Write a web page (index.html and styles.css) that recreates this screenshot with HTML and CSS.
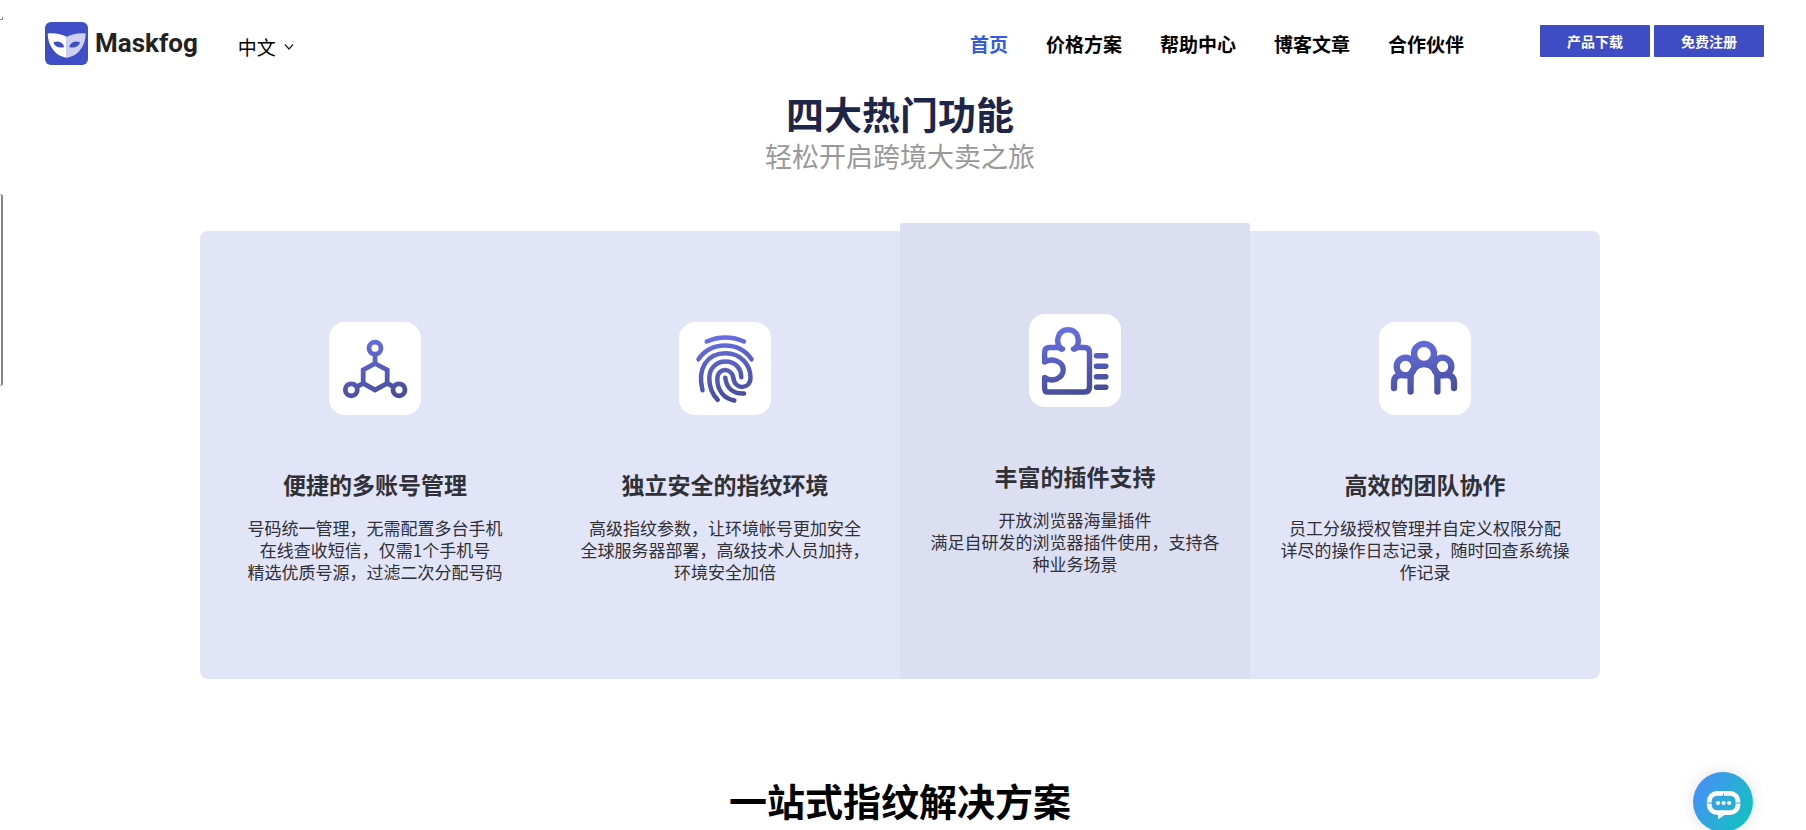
FILE: index.html
```html
<!DOCTYPE html>
<html lang="zh-CN">
<head>
<meta charset="utf-8">
<title>Maskfog</title>
<link rel="stylesheet" href="styles.css">
</head>
<body>
<span class="edge-mark"></span>
<span class="edge-bar"></span>
<header class="header">
  <a class="brand" href="#">
    <svg class="brand-logo" viewBox="0 0 43 43" aria-hidden="true">
      <rect width="43" height="43" rx="6" fill="#3f4dc6"/>
      <path d="M2.7 11.5C10 10.8 16 12 21.7 14.8V35.8C15 34.5 11.5 32 8.3 28 4.5 23.500 2.700 17.500 2.700 11.500Z" fill="#fff"/>
      <path d="M40.700 11.500C33.400 10.800 27.400 12 21.700 14.800V35.800C28.400 34.500 31.900 32 35.100 28 38.900 23.500 40.700 17.500 40.700 11.500Z" fill="#cdd0f1"/>
      <path d="M8.300 20.500C12 18.300 17.500 19.500 19.300 25 14.500 26.500 10 25 8.300 20.500ZM35.100 20.500C31.400 18.300 25.900 19.500 24.100 25 28.900 26.500 33.400 25 35.100 20.500Z" fill="#3f4dc6"/>
    </svg>
    <span class="brand-name">Maskfog</span>
  </a>
  <button class="language" type="button">中文
    <svg class="chevron" viewBox="0 0 10 8" aria-hidden="true"><path d="M1 1.500 5 6 9 1.500" fill="none" stroke="#222" stroke-width="1.200"/></svg>
  </button>
  <nav class="nav">
    <a class="nav-link active" href="#">首页</a>
    <a class="nav-link" href="#">价格方案</a>
    <a class="nav-link" href="#">帮助中心</a>
    <a class="nav-link" href="#">博客文章</a>
    <a class="nav-link" href="#">合作伙伴</a>
  </nav>
  <div class="actions">
    <button class="action" type="button">产品下载</button>
    <button class="action" type="button">免费注册</button>
  </div>
</header>
<main class="main">
  <h2 class="title">四大热门功能</h2>
  <p class="subtitle">轻松开启跨境大卖之旅</p>
  <section class="cards">
    <article class="card">
      <svg class="card-icon" viewBox="0 0 92 92" aria-hidden="true">
        <defs><linearGradient id="ink" gradientUnits="userSpaceOnUse" x1="35" y1="15" x2="50" y2="80"><stop offset="0" stop-color="#656fe0"/><stop offset="1" stop-color="#474c98"/></linearGradient></defs>
        <g fill="none" stroke="url(#ink)" stroke-width="4.800">
          <circle cx="46" cy="25.700" r="6"/><circle cx="22.300" cy="67.300" r="6"/><circle cx="70" cy="67.300" r="6"/>
          <path d="M46 41 58.200 47.500V60.800L46 67.400 34.200 60.800V47.500ZM46.050 31V41M34.200 60.800 27.500 64.400M58.200 60.800 64.800 64.400"/>
        </g>
      </svg>
      <h3 class="card-title">便捷的多账号管理</h3>
      <p class="card-text">号码统一管理，无需配置多台手机<br>在线查收短信，仅需1个手机号<br>精选优质号源，过滤二次分配号码</p>
    </article>
    <article class="card">
      <svg class="card-icon" viewBox="0 0 92 92" aria-hidden="true">
        <g fill="none" stroke="url(#ink)" stroke-width="4.500" stroke-linecap="round">
          <path d="M27.700 19C39.500 13.500 53.500 13.500 65 19"/>
          <path d="M19.500 36.800C32 18.500 60 18.500 72.500 36.800"/>
          <path d="M23.500 67.700C18 46 28 30.700 46.700 30.700 61 30.700 71.500 41.500 71.500 55 71.500 67 56.500 67.500 54.500 56.500 53.500 44.500 38.300 44.500 38.300 56.500 38.300 68 45 76 55.300 78"/>
          <path d="M62.300 54.700C62 45 55.500 39 46.700 39 37 39 30.300 46 30.300 55.700 30.300 65 33.500 72 38.700 77.300"/>
          <path d="M46.300 55.300C47.500 66 54.500 71.500 65 71"/>
        </g>
      </svg>
      <h3 class="card-title">独立安全的指纹环境</h3>
      <p class="card-text">高级指纹参数，让环境帐号更加安全<br>全球服务器部署，高级技术人员加持，环境安全加倍</p>
    </article>
    <article class="card raised">
      <svg class="card-icon" viewBox="0 0 92 92" aria-hidden="true">
        <g fill="none" stroke="url(#ink)" stroke-width="5.400" stroke-linecap="round" stroke-linejoin="round">
          <path d="M15.600 47.500V38Q15.600 33 20.600 33H30.500L32.200 34.500C25.500 27 29 15.300 39 15.300S52.500 27 45.800 34.500L47.500 33H55.500Q60.500 33 60.500 38V72.500Q60.500 77.500 55.500 77.500H17.600Q15.600 77.500 15.600 72.500V63C19 65.500 24 66 27.500 64.500 36.500 60 36.500 50 27.500 46.500 23.500 45 19 45.500 15.600 47.500"/>
          <path d="M28.500 32.500 33.500 34.500M49.500 32.500 44.500 34.500M67.500 41.300H76.800M67.500 51.700H76.800M67.500 62.300H76.800M67.500 72.700H76.800"/>
        </g>
      </svg>
      <h3 class="card-title">丰富的插件支持</h3>
      <p class="card-text">开放浏览器海量插件<br>满足自研发的浏览器插件使用，支持各种业务场景</p>
    </article>
    <article class="card">
      <svg class="card-icon" viewBox="0 0 92 92" aria-hidden="true">
        <g fill="none" stroke="url(#ink)" stroke-width="6.300" stroke-linecap="round">
          <circle cx="45" cy="31.300" r="10"/><circle cx="26.500" cy="44" r="8.800"/><circle cx="63.500" cy="44" r="8.800"/>
          <path d="M15 65.500V60Q15 52.600 22 52.600H31.600M75 65.500V60Q75 52.600 68 52.600H58.400M31.600 69V55A13.400 13.400 0 0 1 58.400 55V69"/>
        </g>
      </svg>
      <h3 class="card-title">高效的团队协作</h3>
      <p class="card-text">员工分级授权管理并自定义权限分配<br>详尽的操作日志记录，随时回查系统操作记录</p>
    </article>
  </section>
  <h2 class="title solution">一站式指纹解决方案</h2>
</main>
<button class="chat" type="button" aria-label="在线客服">
  <svg viewBox="0 0 60 60" aria-hidden="true">
    <rect x="16.200" y="21.300" width="28.800" height="19.400" rx="8" fill="none" stroke="#fff" stroke-width="4.800"/>
    <path d="M22.500 42H33L26.500 46.500Q25 47.300 25 45.500V42Z" fill="#fff"/>
    <path d="M13.500 31H19M42.500 31H48M30.500 21.500V24" stroke="#2ba9dc" stroke-width="1"/>
    <g fill="#fff"><circle cx="25" cy="31" r="2.100"/><circle cx="30.600" cy="31" r="2.100"/><circle cx="36.200" cy="31" r="2.100"/></g>
  </svg>
</button>
</body>
</html>
```
FILE: styles.css
```css
* { box-sizing: border-box; }

body {
  margin: 0;
  padding-right: 6px;
  background: #fff;
  color: #000;
  font-family: "Noto Sans CJK SC", "Open Sans", sans-serif;
}

h2, h3, p { margin: 0; }

button {
  border: 0;
  padding: 0;
  font-family: inherit;
  cursor: pointer;
}

a { color: inherit; text-decoration: none; }

.edge-mark, .edge-bar {
  position: absolute;
  left: 0;
  width: 3px;
}

.edge-mark {
  top: 17px;
  height: 3px;
  border-right: 1px solid #888;
  border-bottom: 1px solid #888;
}

.edge-bar {
  top: 194px;
  height: 192px;
  border-right: 2px solid #858585;
  border-radius: 0 3px 3px 0;
}

.header {
  display: flex;
  align-items: center;
  height: 87px;
  padding: 0 36px 0 45px;
}

.brand {
  display: flex;
  align-items: center;
  gap: 7px;
}

.brand-logo { width: 43px; height: 43px; }

.brand-name {
  color: #222;
  font: bold 26px/43px Roboto, sans-serif;
}

.language {
  display: flex;
  align-items: center;
  gap: 8px;
  margin: 6px 0 0 40px;
  background: none;
  color: #000;
  font-size: 19px;
  line-height: 24px;
}

.chevron { width: 10px; height: 8px; }

.nav {
  display: flex;
  gap: 38px;
  margin-left: auto;
  font-size: 19px;
  font-weight: bold;
  line-height: 24px;
}

.nav-link.active { color: #345bdd; }

.actions {
  display: flex;
  gap: 4px;
  margin: 0 0 6px 76px;
}

.action {
  width: 110px;
  height: 32px;
  border-radius: 1px;
  background: #3f4dc4;
  color: #fff;
  font-size: 14px;
  font-weight: bold;
}

.main { text-align: center; }

.title {
  color: #1d2548;
  font-size: 38px;
  font-weight: bold;
  line-height: 52px;
}

.subtitle {
  color: #999;
  font-size: 27px;
  line-height: 34px;
}

.cards {
  display: grid;
  grid-template-columns: repeat(4, 1fr);
  width: 78%;
  max-width: 1400px;
  margin: 58px auto 0;
  border-radius: 8px;
  background: #e2e4f7;
}

.card {
  padding: 91px 27px 96px;
  color: #303136;
}

.card.raised {
  margin-top: -8px;
  border-radius: 2px 2px 0 0;
  background: #dcdef2;
}

.card-icon {
  display: block;
  width: 92px;
  height: 93px;
  margin: 0 auto;
  border-radius: 16px;
  background: #fff;
}

.card-title {
  margin-top: 53px;
  font-size: 23px;
  font-weight: bold;
  line-height: 32px;
}

.card-text {
  margin-top: 17px;
  font-size: 17px;
  line-height: 22px;
}

.title.solution {
  margin-top: 95px;
  color: #000;
}

.chat {
  position: fixed;
  right: 53px;
  bottom: -2px;
  width: 60px;
  height: 60px;
  border-radius: 50%;
  background: linear-gradient(120deg, #4690f6 10%, #16bfc4 85%);
  box-shadow: 0 0 16px rgba(0, 0, 0, 0.12);
}
```
